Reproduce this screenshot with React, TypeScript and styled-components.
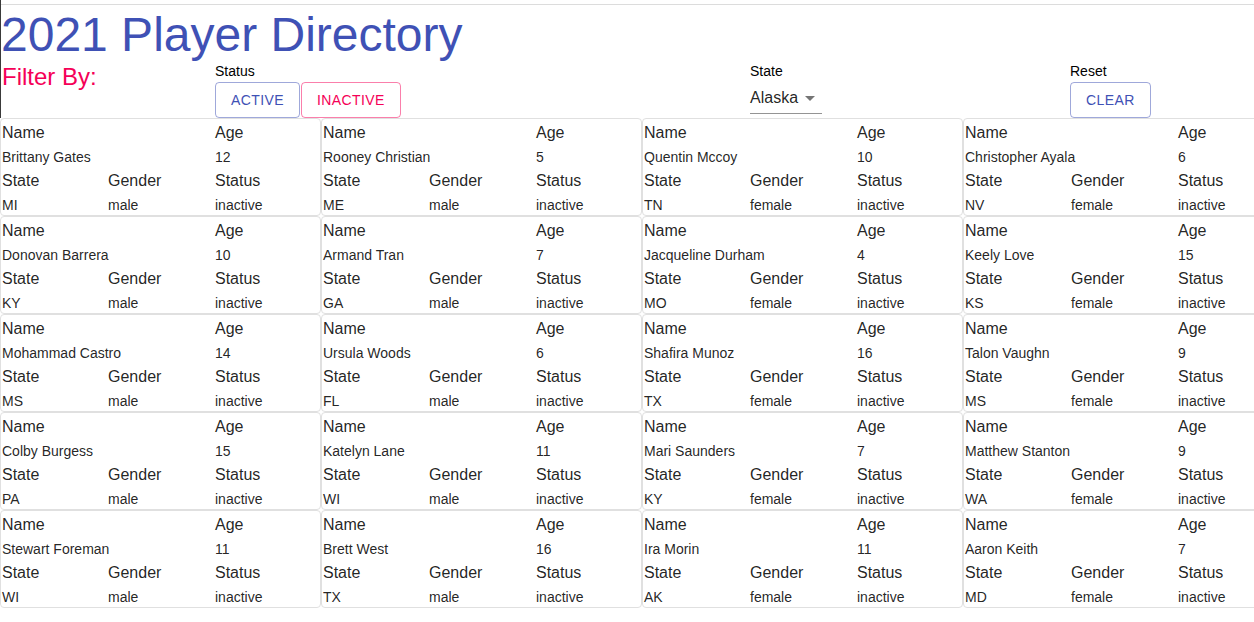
import React, { useState } from 'react';
import styled, { createGlobalStyle } from 'styled-components';

const Colors = {
  primary: '#3f51b5',
  secondary: '#f50057',
  text: 'rgba(0, 0, 0, 0.87)',
  border: '#e0e0e0',
};

interface Player {
  name: string;
  age: number;
  state: string;
  gender: string;
  status: string;
}

const raw: [string, number, string, string][] = [
  ['Brittany Gates', 12, 'MI', 'male'],
  ['Rooney Christian', 5, 'ME', 'male'],
  ['Quentin Mccoy', 10, 'TN', 'female'],
  ['Christopher Ayala', 6, 'NV', 'female'],
  ['Donovan Barrera', 10, 'KY', 'male'],
  ['Armand Tran', 7, 'GA', 'male'],
  ['Jacqueline Durham', 4, 'MO', 'female'],
  ['Keely Love', 15, 'KS', 'female'],
  ['Mohammad Castro', 14, 'MS', 'male'],
  ['Ursula Woods', 6, 'FL', 'male'],
  ['Shafira Munoz', 16, 'TX', 'female'],
  ['Talon Vaughn', 9, 'MS', 'female'],
  ['Colby Burgess', 15, 'PA', 'male'],
  ['Katelyn Lane', 11, 'WI', 'male'],
  ['Mari Saunders', 7, 'KY', 'female'],
  ['Matthew Stanton', 9, 'WA', 'female'],
  ['Stewart Foreman', 11, 'WI', 'male'],
  ['Brett West', 16, 'TX', 'male'],
  ['Ira Morin', 11, 'AK', 'female'],
  ['Aaron Keith', 7, 'MD', 'female'],
];

const players: Player[] = raw.map(([name, age, state, gender]) => ({
  name,
  age,
  state,
  gender,
  status: 'inactive',
}));

const PlayerCard: React.FC<{ player: Player }> = ({ player }) => (
  <Card>
    <Label $span={2}>Name</Label>
    <Label>Age</Label>
    <Value $span={2}>{player.name}</Value>
    <Value>{player.age}</Value>
    <Label>State</Label>
    <Label>Gender</Label>
    <Label>Status</Label>
    <Value>{player.state}</Value>
    <Value>{player.gender}</Value>
    <Value>{player.status}</Value>
  </Card>
);

const App: React.FC = () => {
  const [status, setStatus] = useState<string>('inactive');

  return (
    <>
      <GlobalStyle />
      <Page>
        <Header>
          <Title>2021 Player Directory</Title>
          <FilterRow>
            <FilterTitle>Filter By:</FilterTitle>
            <FilterGroup>
              <FilterLabel>Status</FilterLabel>
              <div>
                <OutlineButton $color="primary" onClick={() => setStatus('active')}>
                  Active
                </OutlineButton>
                <OutlineButton $color="secondary" onClick={() => setStatus('inactive')}>
                  Inactive
                </OutlineButton>
              </div>
            </FilterGroup>
            <FilterGroup>
              <FilterLabel>State</FilterLabel>
              <SelectBox>
                <SelectValue>Alaska</SelectValue>
                <ArrowIcon viewBox="0 0 24 24">
                  <path d="M7 10l5 5 5-5z" />
                </ArrowIcon>
              </SelectBox>
            </FilterGroup>
            <FilterGroup>
              <FilterLabel>Reset</FilterLabel>
              <div>
                <OutlineButton $color="primary" onClick={() => setStatus('')}>
                  Clear
                </OutlineButton>
              </div>
            </FilterGroup>
          </FilterRow>
        </Header>
        <CardGrid data-status={status}>
          {players.map((p) => (
            <PlayerCard key={p.name} player={p} />
          ))}
        </CardGrid>
      </Page>
    </>
  );
};

const GlobalStyle = createGlobalStyle`
  html, body {
    margin: 0;
    padding: 0;
    overflow: hidden;
    background: #fff;
  }
  body {
    font-family: 'Liberation Sans', Arial, sans-serif;
    color: ${Colors.text};
  }
`;

const Page = styled.div`
  width: 1284px;
`;

// the thin dark edge on the left of the header area
const Header = styled.header`
  padding-top: 4px;
  border-left: 1px solid #3a3a3a;
`;

const Title = styled.h1`
  margin: 0;
  padding-top: 2px;
  border-top: 1px solid #dcdcdc;
  font-size: 48px;
  font-weight: 400;
  line-height: 56px;
  color: ${Colors.primary};
`;

const FilterRow = styled.div`
  display: grid;
  grid-template-columns: 214px 535px 320px 1fr;
  height: 55px;
`;

const FilterTitle = styled.div`
  padding: 2px 0 0 1px;
  font-size: 24px;
  line-height: 24px;
  color: ${Colors.secondary};
`;

const FilterGroup = styled.div`
  display: flex;
  flex-direction: column;
  align-items: flex-start;
`;

const FilterLabel = styled.div`
  font-size: 14px;
  line-height: 16px;
  color: #000;
  margin-bottom: 3px;
`;

const OutlineButton = styled.button<{ $color: 'primary' | 'secondary' }>`
  box-sizing: border-box;
  height: 36px;
  min-width: 64px;
  padding: 5px 15px;
  margin: 0 1px 0 0;
  background: transparent;
  border-radius: 4px;
  font-family: 'Liberation Sans', Arial, sans-serif;
  font-size: 14px;
  font-weight: 400;
  letter-spacing: 0.4px;
  text-transform: uppercase;
  cursor: pointer;
  color: ${(p) => (p.$color === 'primary' ? Colors.primary : Colors.secondary)};
  border: 1px solid
    ${(p) => (p.$color === 'primary' ? 'rgba(63, 81, 181, 0.5)' : 'rgba(245, 0, 87, 0.5)')};
`;

const SelectBox = styled.div`
  position: relative;
  box-sizing: border-box;
  width: 72px;
  height: 33px;
  padding: 7px 24px 6px 0;
  margin-top: -1px;
  border-bottom: 1px solid rgba(0, 0, 0, 0.42);
`;

const SelectValue = styled.span`
  display: block;
  font-size: 16px;
  line-height: 19px;
  color: ${Colors.text};
`;

const ArrowIcon = styled.svg`
  position: absolute;
  right: 0;
  top: calc(50% - 11px);
  width: 24px;
  height: 24px;
  fill: rgba(0, 0, 0, 0.54);
`;

const CardGrid = styled.div`
  display: grid;
  grid-template-columns: repeat(4, 321px);
`;

const Card = styled.div`
  box-sizing: border-box;
  height: 98px;
  border: 1px solid ${Colors.border};
  border-radius: 4px;
  padding: 2px 0 0 1px;
  display: grid;
  grid-template-columns: 106px 107px 1fr;
  grid-auto-rows: 24px;
`;

const Label = styled.div<{ $span?: number }>`
  grid-column: span ${(p) => p.$span ?? 1};
  font-size: 16px;
  line-height: 24px;
  color: ${Colors.text};
`;

const Value = styled.div<{ $span?: number }>`
  grid-column: span ${(p) => p.$span ?? 1};
  font-size: 14px;
  line-height: 25px;
  color: ${Colors.text};
`;

export default App;
